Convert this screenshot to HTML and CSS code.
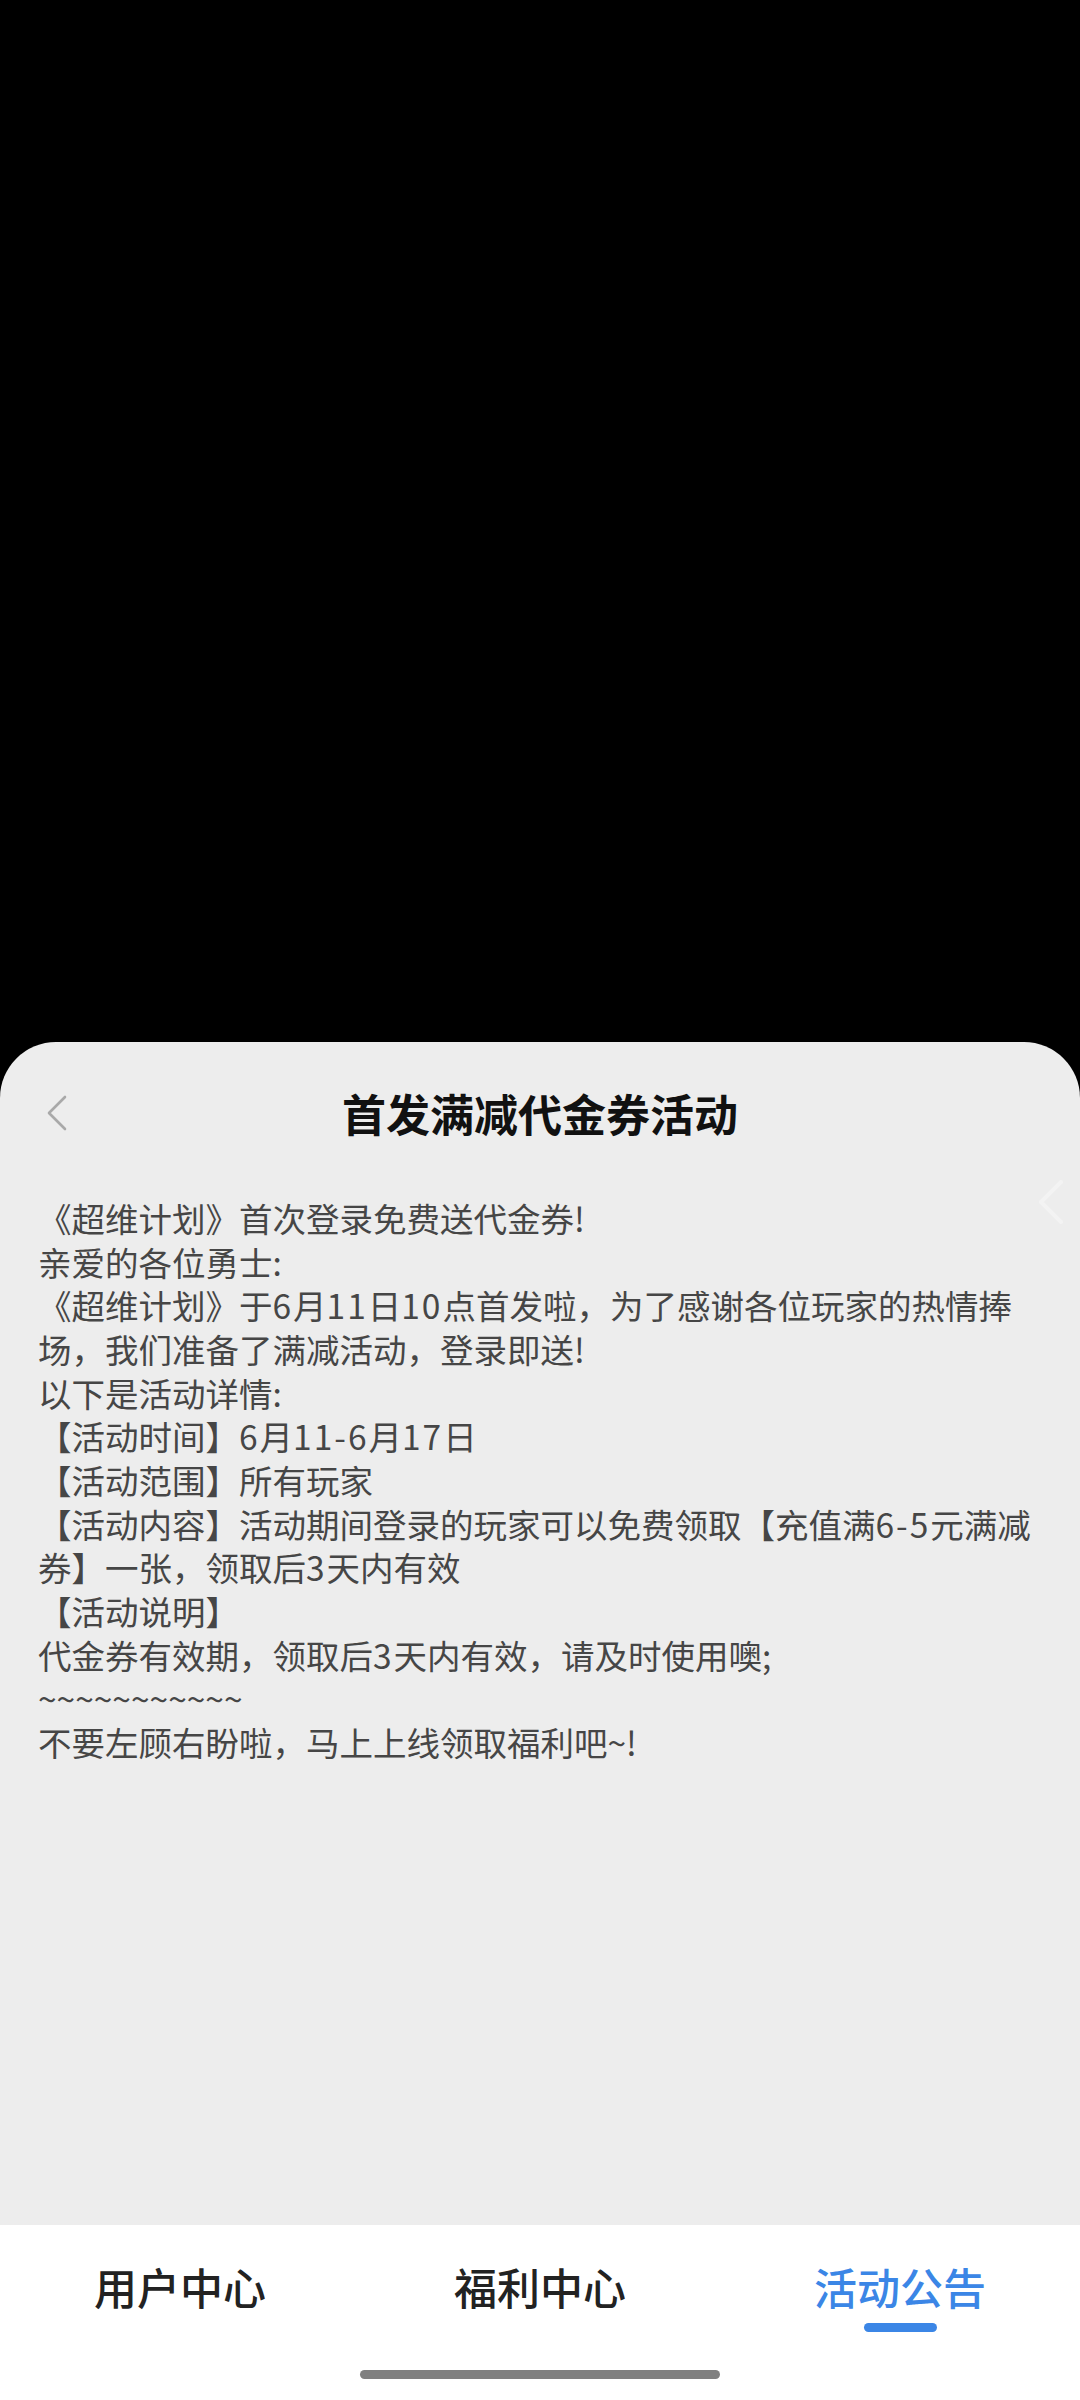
FILE: index.html
```html
<!DOCTYPE html>
<html lang="zh-CN">
  <head>
    <meta charset="UTF-8" />
    <meta name="viewport" content="width=device-width, initial-scale=1.0" />
    <title>首发满减代金券活动</title>
    <link rel="stylesheet" href="styles.css">
  </head>
  <body>
    <div class="backdrop"></div>

    <div class="sheet">
      <div class="sheet-header">
        <span class="back">
          <svg width="24" height="38" viewBox="0 0 24 38">
            <polyline points="20,3 4,19 20,35" fill="none" stroke="#a9a9a9" stroke-width="2.6" stroke-linecap="round" stroke-linejoin="round" />
          </svg>
        </span>
        <h1 class="title">首发满减代金券活动</h1>
        <!-- edge swipe hint -->
        <span class="edge-hint">
          <svg width="26" height="44" viewBox="0 0 26 44">
            <polyline points="23,2 3,22 23,42" fill="none" stroke="#f3f3f3" stroke-width="4" stroke-linecap="round" stroke-linejoin="round" />
          </svg>
        </span>
      </div>

      <div class="content">
        <p>《超维计划》首次登录免费送代金券!</p>
        <p>亲爱的各位勇士:</p>
        <p>《超维计划》于<span class="num">6</span>月<span class="num">11</span>日<span class="num">10</span>点首发啦，为了感谢各位玩家的热情捧场，我们准备了满减活动，登录即送!</p>
        <p>以下是活动详情:</p>
        <p>【活动时间】<span class="num">6</span>月<span class="num">11-6</span>月<span class="num">17</span>日</p>
        <p>【活动范围】所有玩家</p>
        <p>【活动内容】活动期间登录的玩家可以免费领取【充值满<span class="num">6-5</span>元满减券】一张，领取后<span class="num">3</span>天内有效</p>
        <p>【活动说明】</p>
        <p>代金券有效期，领取后<span class="num">3</span>天内有效，请及时使用噢;</p>
        <p>~~~~~~~~~~~</p>
        <p>不要左顾右盼啦，马上上线领取福利吧~!</p>
      </div>

      <div class="tabbar">
        <div class="tabs">
          <div class="tab">用户中心</div>
          <div class="tab">福利中心</div>
          <div class="tab active">活动公告</div>
        </div>
        <div class="home-indicator"></div>
      </div>
    </div>
  </body>
</html>
```

FILE: styles.css
```css
body {
  margin: 0;
  width: 1080px;
  height: 2400px;
  background-color: #000;
  font-family: 'Noto Sans CJK SC', 'Noto Sans', sans-serif;
  display: flex;
  flex-direction: column;
  overflow: hidden;
}

.backdrop {
  flex: 0 0 1042px;
}

.sheet {
  flex: 1;
  background-color: #ededed;
  border-radius: 56px 56px 0 0;
  display: flex;
  flex-direction: column;
}

.sheet-header {
  position: relative;
  height: 142px;
  display: flex;
  justify-content: center;
  align-items: center;
}
.title {
  margin: 0;
  font-size: 44px;
  font-weight: bold;
  color: #111;
  line-height: 1;
}
.back {
  position: absolute;
  left: 45px;
  top: 52px;
  display: flex;
}
.edge-hint {
  position: absolute;
  right: 16px;
  top: 138px;
  display: flex;
}

.content {
  flex: 1;
  padding: 12px 0 0 38px;
  width: 1000px;
  font-size: 33.5px;
  line-height: 43.67px;
  color: #464646;
}
.content p {
  margin: 0;
}
.num {
  letter-spacing: 2px;
}

.tabbar {
  flex: 0 0 175px;
  background-color: #fff;
  display: flex;
  flex-direction: column;
  align-items: center;
}
.tabs {
  display: grid;
  grid-template-columns: repeat(3, 1fr);
  width: 100%;
  padding-top: 36px;
}
.tab {
  text-align: center;
  font-size: 43px;
  font-weight: 500;
  line-height: 50px;
  color: #222;
}
.tab.active {
  color: #3b86e6;
}
.tab.active::after {
  content: '';
  display: block;
  width: 73px;
  height: 9px;
  margin: 12px auto 0;
  border-radius: 5px;
  background-color: #3b86e6;
}
.home-indicator {
  width: 360px;
  height: 9px;
  margin-top: 38px;
  border-radius: 5px;
  background-color: #808080;
}
```
